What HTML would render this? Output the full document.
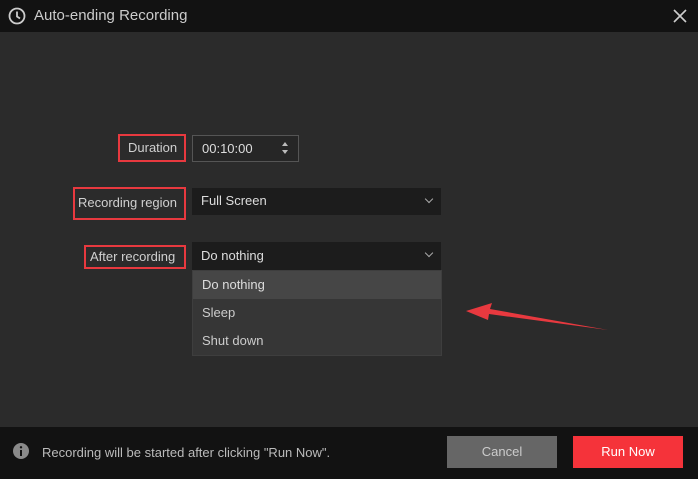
<!DOCTYPE html>
<html><head><style>
*{margin:0;padding:0;box-sizing:border-box}
body{width:698px;height:479px;background:#2b2b2b;font-family:"Liberation Sans",sans-serif;font-size:13px;color:#ccc;position:relative;overflow:hidden}
.a{position:absolute}
.title{left:0;top:0;width:698px;height:32px;background:#121212}
.red{border:2px solid #e8393f}
.lbl{color:#d0d0d0;font-size:13px}
.box{background:#1c1c1c;color:#ddd;padding-left:9px;line-height:26px}
.chev{position:absolute;right:9px;top:8px;width:6px;height:6px;border-right:1.5px solid #aaa;border-bottom:1.5px solid #aaa;transform:rotate(45deg)}
</style></head><body>
<div class="a title"></div>
<svg class="a" style="left:8px;top:7px" width="18" height="18" viewBox="0 0 18 18"><circle cx="9" cy="9" r="7.5" fill="none" stroke="#ccc" stroke-width="1.8"/><path d="M9 4.5V9.5L12 11.5" fill="none" stroke="#ccc" stroke-width="1.8"/></svg>
<div class="a" style="left:34px;top:7px;font-size:15px;color:#ccc">Auto-ending Recording</div>
<svg class="a" style="left:672px;top:8px" width="16" height="16"><path d="M2 2L14 14M14 2L2 14" stroke="#ccc" stroke-width="1.6"/></svg>

<div class="a red" style="left:118px;top:134px;width:68px;height:28px"></div>
<div class="a lbl" style="left:128px;top:140px">Duration</div>
<div class="a box" style="left:192px;top:135px;width:107px;height:27px;border:1px solid #555;background:#262626;line-height:25px">00:10:00</div>
<svg class="a" style="left:281px;top:140px" width="8" height="16"><path d="M1 6L4 2L7 6Z M1 10L4 14L7 10Z" fill="#bbb"/></svg>

<div class="a red" style="left:73px;top:187px;width:113px;height:33px"></div>
<div class="a lbl" style="left:78px;top:195px">Recording region</div>
<div class="a box" style="left:192px;top:188px;width:249px;height:27px">Full Screen<div class="chev"></div></div>

<div class="a red" style="left:84px;top:245px;width:102px;height:24px"></div>
<div class="a lbl" style="left:90px;top:249px">After recording</div>
<div class="a box" style="left:192px;top:242px;width:249px;height:28px;line-height:28px">Do nothing<div class="chev"></div></div>
<div class="a" style="left:192px;top:270px;width:250px;height:86px;background:#363636;border:1px solid #3e3e3e">
<div style="height:28px;background:#464646;padding-left:9px;line-height:28px;color:#ddd">Do nothing</div>
<div style="height:28px;padding-left:9px;line-height:28px;color:#ccc">Sleep</div>
<div style="height:28px;padding-left:9px;line-height:28px;color:#ccc">Shut down</div>
</div>
<svg class="a" style="left:460px;top:300px" width="160" height="40"><path d="M6 11L32 3L30 9L148 30L29 14L28 20Z" fill="#e8393f"/></svg>

<div class="a" style="left:0;top:427px;width:698px;height:52px;background:#121212"></div>
<svg class="a" style="left:12px;top:442px" width="18" height="18"><circle cx="9" cy="9" r="8" fill="#8a8a8a"/><rect x="8" y="8" width="2" height="6" fill="#121212"/><circle cx="9" cy="5.3" r="1.2" fill="#121212"/></svg>
<div class="a" style="left:42px;top:445px;color:#bbb">Recording will be started after clicking "Run Now".</div>
<div class="a" style="left:447px;top:436px;width:110px;height:32px;background:#666;color:#ccc;text-align:center;line-height:32px">Cancel</div>
<div class="a" style="left:573px;top:436px;width:110px;height:32px;background:#f5333a;color:#fff;text-align:center;line-height:32px">Run Now</div>
</body></html>
